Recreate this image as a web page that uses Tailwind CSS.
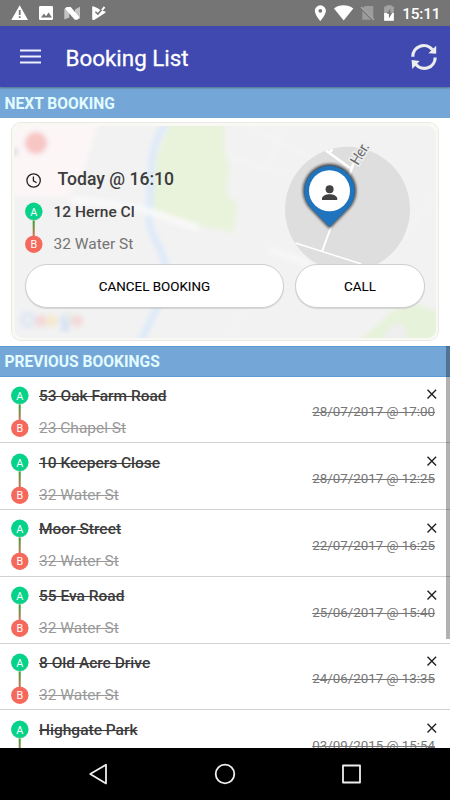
<!DOCTYPE html>
<html lang="en">
<head>
    <meta charset="UTF-8">
    <title>Booking List</title>
    <script src="https://cdn.jsdelivr.net/npm/@tailwindcss/browser@4"></script>
</head>
<body class="bg-white font-['Roboto',sans-serif] text-[#3c3c3c]">

<div class="relative flex flex-col w-[450px] h-[800px] overflow-hidden">

    <!-- Status bar -->
    <div class="flex-none h-[26px] bg-[#757575]">
        <svg class="block" width="450" height="26" viewBox="0 0 450 26" fill="#fff">
            <path d="M19.7 5.3 28 20H11.3z"/>
            <path d="M18.8 10h1.8v5h-1.8zM18.8 16.2h1.8v1.9h-1.8z" fill="#757575"/>
            <rect x="39" y="6" width="14" height="14" rx="1.2"/>
            <path d="M41 17.6l3-4 2 2.6 2.6-3.6 3.4 5z" fill="#757575"/>
            <path d="M64.3 9l5-2.2v10.6l-5 2.2zM75 9.4l5-2.6v10.4l-5 2.4z" fill="#c4c4c4"/>
            <path d="M66.6 7h4.2l9.2 11-3 1.8h-2.2L65 8.6z"/>
            <path d="M92.2 7q0-1 1-.7l4 1.8 3.6 2.2 4.4 1.2q.8.6.2 1.2l-10.8 7q-2.4 1-2.4-.8z"/>
            <path d="M95.4 11.7l2.5 2.4 5.5-6.7" fill="none" stroke="#757575" stroke-width="1.5"/>
            <path d="M103.8 6.3l1.5 1.4-3 3.4-1-1.6z"/>
            <path fill-rule="evenodd" d="M320.3 5.3a5.5 5.5 0 0 0-5.5 5.5c0 4.1 5.5 10.2 5.5 10.2s5.6-6.1 5.6-10.2a5.5 5.5 0 0 0-5.6-5.5zm0 3.6a1.9 1.9 0 1 1 0 3.8 1.9 1.9 0 0 1 0-3.8z"/>
            <path d="M334 8.4c5-4.2 14-4.2 19.3 0L343.7 20.5z"/>
            <path d="M365 6h7q1.3 0 1.3 1.3V20L362 8.6zM362.3 11v8.8h8.8z" fill="#9c9c9c"/>
            <path d="M361 7l13 13" stroke="#a8a8a8" stroke-width="1.3"/>
            <path d="M386.6 5.2h5v1.3h2.3V13h-9.8V6.5h2.5z" fill="#a3a3a3"/>
            <path d="M384.1 13h9.8v7.8h-9.8z"/>
            <path d="M390.3 8.4l-3.6 5.4h2.2v4.6l3.4-5.6h-2z" fill="#757575"/>
            <text x="402.3" y="19.2" font-size="15.4" font-weight="500" textLength="38.2">15:11</text>
        </svg>
    </div>

    <!-- App bar -->
    <header class="relative z-10 flex-none h-[61px] flex items-center bg-[#3f49af] pl-5 pr-3 shadow-[0_1px_2px_rgba(0,0,0,0.35)]">
        <svg width="21" height="17" viewBox="0 0 21 17" stroke="#eef0ff" stroke-width="2">
            <path d="M0 2.5h21M0 8.6h21M0 14.6h21"/>
        </svg>
        <h1 class="ml-[24.5px] mt-0.5 text-[22.4px] leading-7 text-white [-webkit-text-stroke:0.3px_white]">Booking List</h1>
        <svg class="ml-auto" width="28" height="28" viewBox="0 0 28 28">
            <g fill="none" stroke="#ededed" stroke-width="3.2">
                <path d="M2.8 13.7A11 11 0 0 1 22.5 6.8"/>
                <path d="M25.2 14.4A11 11 0 0 1 5.7 21.3"/>
            </g>
            <path d="M26.2 2.7v8.1l-7.8-.6zM1.6 17.1l8 .8-7.3 8z" fill="#ededed"/>
        </svg>
    </header>

    <h2 class="flex-none h-[31px] bg-[#74a7d7] pl-[4.5px] pt-[1px] text-[15.6px] leading-[32px] font-bold text-[#e2fbff]">NEXT BOOKING</h2>

    <!-- Next booking -->
    <section class="relative flex-none mx-[11px] mt-1 mb-[5px] h-[219px] rounded-[9px] overflow-hidden">
        <svg class="absolute inset-0" width="428" height="219" viewBox="11 122 428 219">
            <defs>
                <clipPath id="mapClip"><rect x="14.5" y="126" width="421.5" height="212" rx="9"/></clipPath>
                <filter id="soft" x="-20%" y="-20%" width="140%" height="140%"><feGaussianBlur stdDeviation="2.8"/></filter>
                <filter id="glow" x="-30%" y="-30%" width="160%" height="160%"><feGaussianBlur stdDeviation="1.6"/></filter>
            </defs>
            <rect x="11.5" y="122.5" width="427" height="218" rx="8.5" fill="#f9f8f3" stroke="#e9e9e6"/>
            <g clip-path="url(#mapClip)">
                <rect x="14" y="126" width="422" height="212" fill="#f2f2f2"/>
                <g filter="url(#soft)">
                    <path d="M8 118h92L80 182l-14 16-60-2z" fill="#fcf6f7"/>
                    <path d="M172 118h52l0 32 6 16-4 28 12 10-4 28-34-6-48-18 4-50z" fill="#e9f3dc"/>
                    <path d="M170 118c-14 18-18 30-19 54l-2 45c0 18 12 28 16 46l-4 36-23 48" fill="none" stroke="#dce9fa" stroke-width="6.5"/>
                    <path d="M70 199l68 9 60 20" fill="none" stroke="#f9f9f9" stroke-width="7"/>
                    <path d="M270 250l40 14" fill="none" stroke="#f8f8f8" stroke-width="6"/>
                    <path d="M356 344l38-34 22-6 24 8v32z" fill="#e6f2d9"/>
                    <path d="M385 344v-10q4-10 14-10t6 20z" fill="#efefef"/>
                    <circle cx="36" cy="143" r="11" fill="#f7c6c5"/>
                    <circle cx="14" cy="152" r="4" fill="#dddadc"/>
                    <g stroke="#f5f5f5" stroke-width="2.5" fill="none">
                        <path d="M225 155l60 20M290 120l-20 40M250 126l75 40M436 195l-55 70M250 308l-30 34"/>
                    </g>
                </g>
                <g filter="url(#soft)" fill="none" stroke-width="5" opacity="0.4">
                    <circle cx="28" cy="320" r="6" stroke="#c4d7fa"/>
                    <circle cx="41" cy="321" r="3.5" stroke="#f5b1ad"/>
                    <circle cx="52" cy="321" r="3.5" stroke="#f9dd97"/>
                    <path d="M66 317a3.5 3.5 0 1 0 0 7v5h-5" stroke="#a9c8fb"/>
                    <path d="M70 312v13" stroke="#b5dcbf" stroke-width="3"/>
                    <circle cx="77" cy="321" r="3.3" stroke="#f5b1ad"/>
                </g>
                <circle cx="347.5" cy="209.3" r="62.5" fill="#dedede"/>
                <g stroke="#fff" fill="none">
                    <path d="M326 150.5l24 17.5M329 152.5l3.5-3M354 162l-5 14" stroke-width="2.6"/>
                    <path d="M331 227l-9 24.5" stroke-width="2"/>
                    <path d="M295.5 243l66 21" stroke-width="1.5"/>
                </g>
                <text transform="translate(358 166) rotate(-59)" font-size="14.5" fill="#666" stroke="#eee" stroke-width="3" paint-order="stroke" textLength="23">Her.</text>
            </g>
            <!-- Pin -->
            <path d="M329.5 228.5L309.6 208A26.500 26.5 0 1 1 349.6 208z" fill="#111" opacity="0.8" filter="url(#glow)"/>
            <path d="M329.5 227L310.7 208A25.300 25.3 0 1 1 348.4 208z" fill="#2074bd"/>
            <circle cx="329.5" cy="190.8" r="20.5" fill="#fff"/>
            <circle cx="329.6" cy="189.2" r="4" fill="#414141"/>
            <path d="M322 200v-1.6c0-2.7 4.4-4.2 7.6-4.2s7.6 1.5 7.6 4.2v1.6z" fill="#414141"/>
        </svg>

        <div class="relative pl-3.5 pr-3.5 pt-[45px]">
            <div class="flex items-center h-6">
                <svg class="mt-[3px]" width="17" height="17" viewBox="0 0 17 17" fill="none" stroke="#222" stroke-width="1.3">
                    <circle cx="8.6" cy="8.5" r="6.7"/>
                    <path d="M8.4 4.4v4.4l3.2 2"/>
                </svg>
                <span class="ml-[15.5px] text-[17.6px] font-medium">Today @ 16:10</span>
            </div>
            <div class="flex mt-2.5 h-[54px]">
                <svg width="18" height="54" viewBox="0 0 18 54"><use href="#route"/></svg>
                <div class="ml-[10.5px] text-[15.5px]">
                    <p class="h-8 leading-[22px] font-medium">12 Herne Cl</p>
                    <p class="leading-[22px] text-[#747474]">32 Water St</p>
                </div>
            </div>
            <div class="flex gap-[11px] mt-[9px] text-[13.4px] text-black [-webkit-text-stroke:0.1px_black]">
                <button class="w-[259px] h-[44px] pt-0.5 rounded-full bg-white border border-[#cfcfcf] shadow-[0_1px_1px_rgba(0,0,0,0.12)]">CANCEL BOOKING</button>
                <button class="w-[130px] h-[44px] pt-0.5 rounded-full bg-white border border-[#cfcfcf] shadow-[0_1px_1px_rgba(0,0,0,0.12)]">CALL</button>
            </div>
        </div>
    </section>

    <h2 class="flex-none h-[30.6px] bg-[#74a7d7] border-y border-[#5b9bd5] pl-[4.5px] text-[15.6px] leading-[30px] font-bold text-[#e2fbff]">PREVIOUS BOOKINGS</h2>

    <!-- Previous bookings -->
    <div id="bookings" class="flex-1 min-h-0 overflow-hidden"></div>

    <!-- Navigation bar -->
    <nav class="flex-none h-[52px] bg-black">
        <svg class="block" width="450" height="52" viewBox="0 0 450 52" fill="none" stroke="#eee" stroke-width="1.8" stroke-linejoin="round">
            <path d="M106 16.8v18.6L90.2 26z"/>
            <circle cx="225" cy="26" r="9.3"/>
            <rect x="343" y="17.5" width="17" height="17"/>
        </svg>
    </nav>

    <!-- Scrollbar -->
    <div class="absolute top-[346px] right-0 w-[4.5px] h-[293px] bg-black/30"></div>
</div>

<!-- Shared A to B marker -->
<svg class="absolute" width="0" height="0">
    <defs>
        <linearGradient id="line" x1="0" y1="0" x2="0" y2="1">
            <stop offset="0" stop-color="#35a02c"/>
            <stop offset="1" stop-color="#d4705a"/>
        </linearGradient>
        <g id="route" font-size="10.8" fill="#fff" text-anchor="middle">
            <rect x="7.7" y="19.5" width="2" height="16" fill="url(#line)"/>
            <circle cx="8.8" cy="11.1" r="8.7" fill="#000" opacity="0.12"/>
            <circle cx="8.8" cy="10.3" r="8.7" fill="#06d389"/>
            <circle cx="8.8" cy="43.2" r="8.7" fill="#f5695c"/>
            <text x="8.8" y="14.6">A</text>
            <text x="8.8" y="47.3">B</text>
        </g>
    </defs>
</svg>

<script>
    const bookings = [
        { from: '53 Oak Farm Road', to: '23 Chapel St', date: '28/07/2017 @ 17:00' },
        { from: '10 Keepers Close', to: '32 Water St', date: '28/07/2017 @ 12:25' },
        { from: 'Moor Street', to: '32 Water St', date: '22/07/2017 @ 16:25' },
        { from: '55 Eva Road', to: '32 Water St', date: '25/06/2017 @ 15:40' },
        { from: '8 Old Acre Drive', to: '32 Water St', date: '24/06/2017 @ 13:35' },
        { from: 'Highgate Park', to: '32 Water St', date: '03/09/2015 @ 15:54' }
    ];

    const list = document.getElementById('bookings');
    bookings.forEach(b => {
        list.innerHTML += `
            <div class="flex h-[66.75px] border-b border-[#d2d2d2] pl-[11px] pr-[15px] pt-[8.4px]">
                <svg class="flex-none" width="18" height="54" viewBox="0 0 18 54"><use href="#route"/></svg>
                <div class="ml-[10px] text-[15.5px]">
                    <p class="h-8 leading-[22px] font-medium line-through decoration-1">${b.from}</p>
                    <p class="leading-[22px] text-[#999] line-through decoration-1">${b.to}</p>
                </div>
                <div class="ml-auto flex flex-col items-end">
                    <svg class="mt-[3.5px] -mr-[2.5px]" width="12" height="12" viewBox="0 0 12 12" stroke="#222" stroke-width="1.4">
                        <path d="M1.5 1.8l8.6 8.6M10.1 1.8l-8.6 8.6"/>
                    </svg>
                    <p class="mt-[3px] text-[13.35px] leading-[18px] text-[#777] line-through decoration-1">${b.date}</p>
                </div>
            </div>
        `;
    });
</script>
</body>
</html>
